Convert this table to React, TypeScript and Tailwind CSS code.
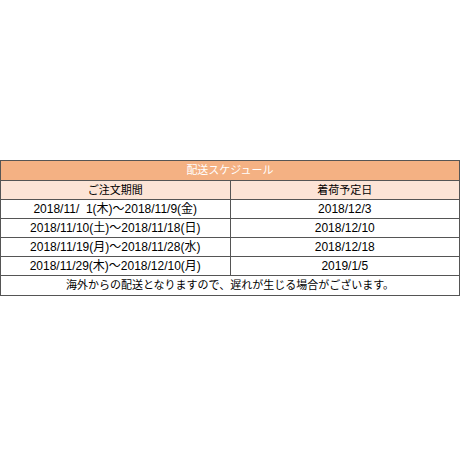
export default function App() {
  const rows = [
    ["2018/11/  1(木)～2018/11/9(金)", "2018/12/3"],
    ["2018/11/10(土)～2018/11/18(日)", "2018/12/10"],
    ["2018/11/19(月)～2018/11/28(水)", "2018/12/18"],
    ["2018/11/29(木)～2018/12/10(月)", "2019/1/5"],
  ];

  return (
    <div
      className="w-[460px] h-[460px] bg-white pt-[160px] text-[12px] text-black"
      style={{ fontFamily: '"Liberation Sans", "Noto Sans CJK JP", sans-serif' }}
    >
      <table className="w-[460px] border-collapse table-fixed">
        <tbody>
          <tr className="h-[20px] bg-[#f4b183]">
            <td colSpan={2} className="border border-[#555] text-center text-white p-0 leading-none text-[11px]">
              配送スケジュール
            </td>
          </tr>
          <tr className="h-[19px] bg-[#fce4d6]">
            <td className="w-[230px] border border-[#555] text-center p-0 leading-none text-[11px]">ご注文期間</td>
            <td className="border border-[#555] text-center p-0 leading-none text-[11px]">着荷予定日</td>
          </tr>
          {rows.map((r) => (
            <tr key={r[0]} className="h-[19px]">
              <td className="border border-[#555] text-center p-0 leading-none whitespace-pre">{r[0]}</td>
              <td className="border border-[#555] text-center p-0 leading-none">{r[1]}</td>
            </tr>
          ))}
          <tr className="h-[20px]">
            <td colSpan={2} className="border border-[#555] text-center p-0 leading-none text-[11px]">
              海外からの配送となりますので、遅れが生じる場合がございます。
            </td>
          </tr>
        </tbody>
      </table>
    </div>
  );
}
